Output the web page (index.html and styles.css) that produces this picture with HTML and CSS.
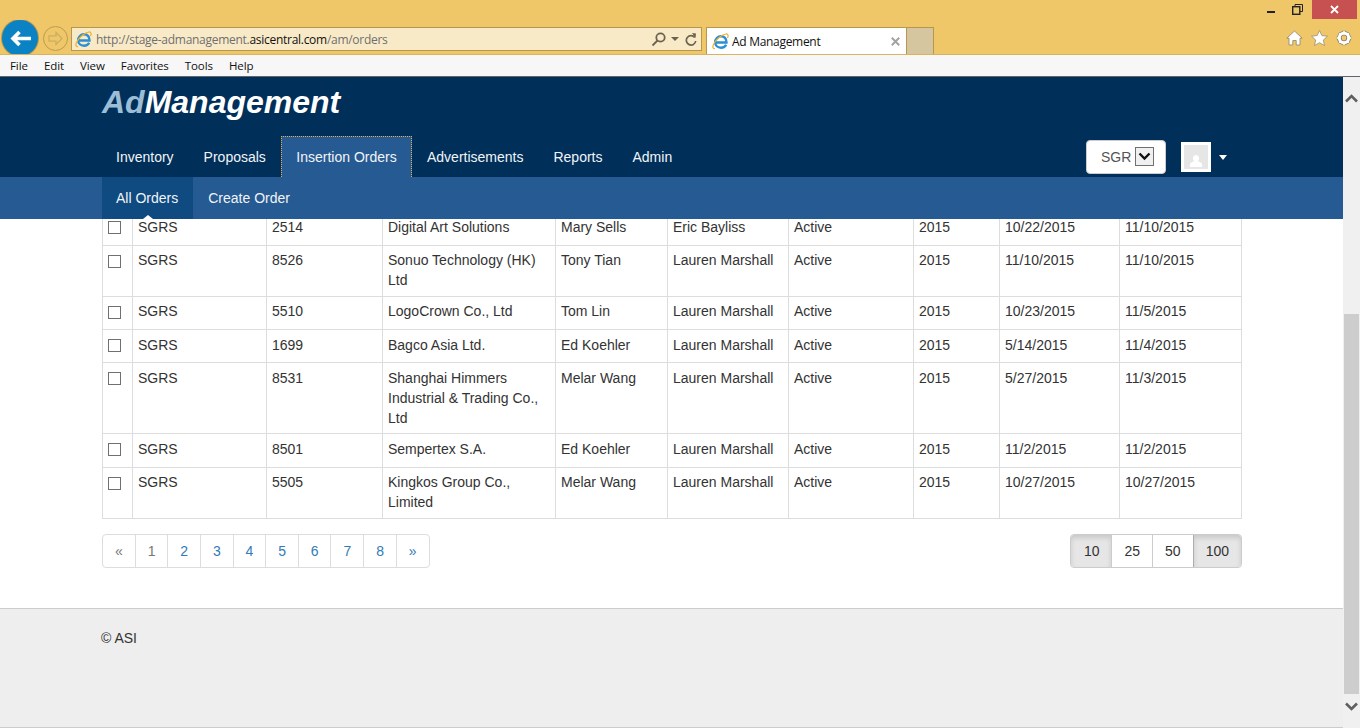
FILE: index.html
```html
<!DOCTYPE html>
<html lang="en">
<head>
<meta charset="utf-8">
<title>Ad Management</title>
<link rel="stylesheet" href="styles.css">
</head>
<body>
<div class="window">
  <div class="chrome">
    <div class="win-row">
      <svg class="win-min" width="9" height="3" viewBox="0 0 9 3"><rect width="8" height="2" y="1" fill="#222"/></svg>
      <svg class="win-restore" width="11" height="11" viewBox="0 0 11 11" fill="none" stroke="#222"><path d="M3 2.500V.5h7.500v7H8"/><rect x=".7" y="2.700" width="7.100" height="7.600" stroke-width="1.400"/></svg>
      <div class="win-close"><svg width="9" height="9" viewBox="0 0 9 9" stroke="#fff" stroke-width="1.800"><path d="M1 1l7 7M8 1l-7 7"/></svg></div>
    </div>
    <div class="nav-row">
      <div class="back"><svg width="21" height="17" viewBox="0 0 21 17" fill="none" stroke="#fff" stroke-width="3.600"><path d="M9.500 2L3 8.500l6.500 6.500M4 8.500h17"/></svg></div>
      <div class="forward"><svg width="17" height="15" viewBox="0 0 17 15" fill="none" stroke="#cdae63" stroke-width="1.300"><path d="M9 1.500l6 6-6 6V10.200H2V4.800h7z"/></svg></div>
      <div class="address">
        <svg class="ie" width="17" height="17" viewBox="0 0 17 17" fill="none"><path d="M3 9.500h11.500C14.600 5.500 12.200 3.300 9 3.300 5.700 3.300 3.200 5.800 3.200 9.200c0 3.400 2.400 5.500 5.800 5.500 2.400 0 4.200-1 5.200-3" stroke="#2a8fd4" stroke-width="2.400"/><path d="M3 15.500C.5 16 .2 13.500 2 10.500 4.500 6 10 1.500 14 1c2.300-.3 2.500 2 1.500 4" stroke="#eeb02c" stroke-width="1.200"/></svg>
        <span class="url">http://stage-admanagement.<b>asicentral.com</b>/am/orders</span>
        <svg class="addr-search" width="16" height="15" viewBox="0 0 16 15" fill="none" stroke="#6b6350" stroke-width="1.800"><circle cx="9.500" cy="5.500" r="4.200"/><path d="M6.500 8.500L1.500 13.500"/></svg>
        <svg class="addr-caret" width="8" height="4" viewBox="0 0 8 4"><path d="M0 0h8L4 4z" fill="#6b6350"/></svg>
        <svg class="addr-refresh" width="12" height="13" viewBox="0 0 12 13" fill="none" stroke="#6b6350" stroke-width="1.700"><path d="M9.800 4.500A4.700 4.700 0 1 0 10.700 8"/><path d="M7 0l4 .5-.5 4.500z" fill="#6b6350" stroke="none"/></svg>
      </div>
      <div class="tab">
        <svg class="ie" width="17" height="17" viewBox="0 0 17 17" fill="none"><path d="M3 9.500h11.500C14.600 5.500 12.200 3.300 9 3.300 5.700 3.300 3.200 5.800 3.200 9.200c0 3.400 2.400 5.500 5.800 5.500 2.400 0 4.200-1 5.200-3" stroke="#2a8fd4" stroke-width="2.400"/><path d="M3 15.500C.5 16 .2 13.500 2 10.500 4.500 6 10 1.500 14 1c2.300-.3 2.500 2 1.500 4" stroke="#eeb02c" stroke-width="1.200"/></svg>
        <span class="tab-title">Ad Management</span>
        <svg class="tab-close" width="9" height="9" viewBox="0 0 9 9" stroke="#a3a3a3" stroke-width="2"><path d="M.8.800l7.400 7.400M8.200.800L.8 8.200"/></svg>
      </div>
      <div class="new-tab"></div>
      <div class="tools">
        <svg width="17" height="16" viewBox="0 0 17 16"><path d="M8.500 1L.8 8.200h2.200V15h3.800v-4.500h3.400V15H14V8.200h2.200z" fill="#fff" stroke="#8d8468" stroke-width=".8"/></svg>
        <svg width="17" height="16" viewBox="0 0 17 16"><path d="M8.500.5l2.400 5.100 5.600.6-4.200 3.800 1.200 5.500-5-2.800-5 2.800 1.200-5.500L.5 6.200l5.600-.6z" fill="#fff" stroke="#8d8468" stroke-width=".7"/></svg>
        <svg width="16" height="16" viewBox="0 0 16 16"><circle cx="8" cy="8" r="4.700" fill="none" stroke="#8d8468" stroke-width="4.600"/><path d="M8 .8v2.500M8 12.700v2.500M.8 8h2.500M12.700 8h2.500M2.900 2.900l1.800 1.800M11.300 11.300l1.800 1.800M2.900 13.100l1.800-1.800M11.300 4.700l1.800-1.800" stroke="#8d8468" stroke-width="3.200"/><circle cx="8" cy="8" r="4.700" fill="none" stroke="#fff" stroke-width="3"/><path d="M8 1.200v2.200M8 12.600v2.200M1.200 8h2.200M12.600 8h2.200M3.200 3.200l1.500 1.500M11.300 11.300l1.500 1.500M3.200 12.800l1.500-1.500M11.300 4.700l1.500-1.500" stroke="#fff" stroke-width="2.200"/></svg>
      </div>
    </div>
  </div>
  <div class="menubar">
    <span>File</span><span>Edit</span><span>View</span><span>Favorites</span><span>Tools</span><span>Help</span>
  </div>
  <div class="viewport">
    <div class="page">
      <header class="site-header">
        <div class="logo"><span class="logo-ad">Ad</span>Management</div>
        <nav class="mainnav">
          <a class="nav-item">Inventory</a>
          <a class="nav-item">Proposals</a>
          <a class="nav-item nav-active">Insertion Orders</a>
          <a class="nav-item">Advertisements</a>
          <a class="nav-item">Reports</a>
          <a class="nav-item">Admin</a>
          <div class="nav-right">
            <div class="org-select">SGR<span class="org-arrow"><svg width="13" height="9" viewBox="0 0 13 9" fill="none" stroke="#111" stroke-width="2.400"><path d="M1.500 1.500l5 5 5-5"/></svg></span></div>
            <div class="avatar"><svg width="24" height="24" viewBox="0 0 24 24"><path d="M12 10c2 0 3 1.400 3 3.200 0 1.300-.6 2.300-1.300 3 2.500.6 4 1.500 4.300 3V22H6v-2.800c.3-1.500 1.800-2.400 4.300-3-.7-.7-1.300-1.700-1.300-3C9 11.400 10 10 12 10z" fill="#fff"/></svg></div>
            <span class="user-caret"></span>
          </div>
        </nav>
      </header>
      <div class="subnav">
        <a class="sub-item sub-active">All Orders</a>
        <a class="sub-item">Create Order</a>
      </div>
      <main class="content">
        <table class="orders">
          <colgroup><col class="c1"><col class="c2"><col class="c3"><col class="c4"><col class="c5"><col class="c6"><col class="c7"><col class="c8"><col class="c9"><col class="c10"></colgroup>
          <tbody>
            <tr class="h33 up first"><td><input type="checkbox"></td><td>SGRS</td><td>2514</td><td>Digital Art Solutions</td><td>Mary Sells</td><td>Eric Bayliss</td><td>Active</td><td>2015</td><td>10/22/2015</td><td>11/10/2015</td></tr>
            <tr class="up"><td><input type="checkbox"></td><td>SGRS</td><td>8526</td><td>Sonuo Technology (HK) Ltd</td><td>Tony Tian</td><td>Lauren Marshall</td><td>Active</td><td>2015</td><td>11/10/2015</td><td>11/10/2015</td></tr>
            <tr class="h33 up"><td><input type="checkbox"></td><td>SGRS</td><td>5510</td><td>LogoCrown Co., Ltd</td><td>Tom Lin</td><td>Lauren Marshall</td><td>Active</td><td>2015</td><td>10/23/2015</td><td>11/5/2015</td></tr>
            <tr class="h33"><td><input type="checkbox"></td><td>SGRS</td><td>1699</td><td>Bagco Asia Ltd.</td><td>Ed Koehler</td><td>Lauren Marshall</td><td>Active</td><td>2015</td><td>5/14/2015</td><td>11/4/2015</td></tr>
            <tr><td><input type="checkbox"></td><td>SGRS</td><td>8531</td><td>Shanghai Himmers Industrial &amp; Trading Co., Ltd</td><td>Melar Wang</td><td>Lauren Marshall</td><td>Active</td><td>2015</td><td>5/27/2015</td><td>11/3/2015</td></tr>
            <tr class="h34"><td><input type="checkbox"></td><td>SGRS</td><td>8501</td><td>Sempertex S.A.</td><td>Ed Koehler</td><td>Lauren Marshall</td><td>Active</td><td>2015</td><td>11/2/2015</td><td>11/2/2015</td></tr>
            <tr class="up"><td><input type="checkbox"></td><td>SGRS</td><td>5505</td><td>Kingkos Group Co., Limited</td><td>Melar Wang</td><td>Lauren Marshall</td><td>Active</td><td>2015</td><td>10/27/2015</td><td>10/27/2015</td></tr>
          </tbody>
        </table>
        <div class="table-foot">
          <div class="pager">
            <a class="disabled">«</a><a class="disabled">1</a><a>2</a><a>3</a><a>4</a><a>5</a><a>6</a><a>7</a><a>8</a><a>»</a>
          </div>
          <div class="sizes">
            <a class="on">10</a><a>25</a><a>50</a><a class="on">100</a>
          </div>
        </div>
      </main>
      <footer class="site-footer">© ASI</footer>
    </div>
    <div class="scrollbar">
      <svg class="sb-arrow" width="13" height="9" viewBox="0 0 13 9" fill="none" stroke="#5f5f5f" stroke-width="2.600"><path d="M1 7.500l5.500-5.500 5.500 5.500"/></svg>
      <div class="sb-track"><div class="sb-thumb"></div></div>
      <svg class="sb-arrow" width="13" height="9" viewBox="0 0 13 9" fill="none" stroke="#5f5f5f" stroke-width="2.600"><path d="M1 1.500l5.500 5.500 5.500-5.500"/></svg>
    </div>
  </div>
</div>
</body>
</html>
```

FILE: styles.css
```css
* { box-sizing: border-box; }
html, body { margin: 0; height: 100%; overflow: hidden; }
body { font-family: "Liberation Sans", Arial, sans-serif; font-size: 14px; line-height: 20px; color: #333; background: #fff; }
a { display: block; }

.window { display: flex; flex-direction: column; height: 728px; }

/* browser frame */
.chrome { height: 55px; background: #efc769; border-bottom: 1px solid #d9b35f; flex: none; font-family: "Open Sans", sans-serif; }
.win-row { height: 20px; display: flex; justify-content: flex-end; align-items: flex-start; padding-right: 3px; }
.win-min { margin: 10px 16px 0 0; }
.win-restore { margin: 4px 9px 0 0; }
.win-close { width: 45px; height: 19px; background: #c75050; display: flex; align-items: center; justify-content: center; }
.nav-row { height: 34px; display: flex; align-items: flex-start; overflow: hidden; position: relative; }
.back { width: 36px; height: 36px; margin-left: 2px; border-radius: 50%; background: #0a82c3; box-shadow: 0 0 0 1px #b8974a; display: flex; align-items: center; justify-content: center; flex: none; }
.forward { width: 25px; height: 25px; margin: 6px 0 0 5px; border-radius: 50%; border: 1px solid #bb9c52; display: flex; align-items: center; justify-content: center; flex: none; }
.address { width: 631px; height: 24px; margin: 7px 0 0 3px; background: #f9eac7; border: 1px solid #b5984f; display: flex; align-items: center; padding: 0 4px 0 3px; flex: none; }
.ie { flex: none; }
.url { font-size: 12px; letter-spacing: -.28px; margin-left: 4px; padding-top: 2px; color: #6f6f6f; white-space: nowrap; }
.url b { font-weight: 400; color: #111; }
.addr-search { margin-left: auto; }
.addr-caret { margin-left: 4px; }
.addr-refresh { margin-left: 6px; }
.tab { width: 200px; height: 27px; margin: 7px 0 0 4px; background: #fff; border: 1px solid #b5984f; border-bottom: 0; border-right: 0; display: flex; align-items: center; padding: 0 6px 0 5px; flex: none; }
.tab-title { font-size: 12px; letter-spacing: -.3px; color: #111; margin-left: 3px; padding-top: 1px; white-space: nowrap; }
.tab-close { margin-left: auto; }
.new-tab { width: 28px; height: 27px; margin-top: 7px; background: #d5c6a0; border: 1px solid #b5984f; border-bottom: 0; flex: none; }
.tools { margin-left: auto; display: flex; gap: 8px; padding: 10px 8px 0 0; align-items: center; }

.menubar { height: 22px; background: #f7f7f7; border-bottom: 1px solid #5f656b; display: flex; flex: none; padding-left: 10px; gap: 16px; font-family: "Open Sans", sans-serif; font-size: 11.500px; letter-spacing: -.08px; line-height: 21px; color: #111; }

.viewport { flex: 1; display: flex; min-height: 0; }
.page { flex: 1; display: flex; flex-direction: column; min-width: 0; }

/* site header */
.site-header { height: 100px; background: #002f5a; flex: none; padding-top: 6px; display: flex; flex-direction: column; }
.logo { padding-left: 102px; height: 53px; font-size: 32px; line-height: 38px; font-weight: 700; font-style: italic; color: #fff; }
.logo-ad { color: #9bbdd6; }
.mainnav { display: flex; padding: 0 116px 0 101px; height: 41px; color: #fff; }
.nav-item { padding: 11px 15px 0; color: #f1f4f7; }
.nav-active { background: #265a92; border: 1px dotted #f0a83c; border-bottom: 0; padding: 10px 14.250px 0 14.500px; }
.nav-right { margin-left: auto; display: flex; align-items: flex-start; padding-top: 4px; }
.org-select { width: 80px; height: 34px; background: #fff; border: 1px solid #ccc; border-radius: 4px; color: #555; padding: 6px 0 0 14px; display: flex; }
.org-arrow { width: 19px; height: 19px; margin-left: 3.500px; border: 1px solid #707070; background: #f0f0f0; display: flex; align-items: center; justify-content: center; }
.avatar { width: 30px; height: 30px; margin: 2px 0 0 15px; background: #e6e6e6; border: 3px solid #fff; }
.user-caret { margin: 15px 0 0 8px; width: 0; height: 0; border-style: solid; border-width: 5px 4.500px 0; border-color: #fff transparent transparent; }

.subnav { height: 42px; background: #265a92; flex: none; display: flex; padding-left: 102px; color: #f1f4f7; }
.sub-item { padding: 11px 15px 0; }
.sub-active { padding-left: 14px; background: #0f4a80; position: relative; }
.sub-active::after { content: ""; position: absolute; left: 41px; bottom: 0; border-style: solid; border-width: 0 5px 4px; border-color: transparent transparent #fff; }

/* content */
.content { height: 389px; flex: none; overflow: hidden; padding: 0 101px 0 102px; }
.orders { width: 1139px; margin-top: -7px; table-layout: fixed; border-collapse: collapse; }
.c1 { width: 30px; } .c2 { width: 134px; } .c3 { width: 116px; } .c4 { width: 173px; } .c5 { width: 112px; }
.c6 { width: 121px; } .c7 { width: 125px; } .c8 { width: 86px; } .c9 { width: 120px; } .c10 { width: 122px; }
.orders td { border: 1px solid #ddd; padding: 5px; vertical-align: top; }
.orders .up td { padding: 4px 5px 6px; }
.orders .h33 { height: 33px; }
.orders .h34 { height: 34px; }
.orders input { appearance: none; display: block; width: 13px; height: 13px; margin: 4px 0 0; background: #fff; border: 1px solid #707070; border-radius: 0; }
.orders .up input { margin-top: 5px; }
.orders .first input { margin-top: 4px; }

.table-foot { display: flex; justify-content: space-between; margin-top: 15px; }
.pager { display: flex; height: 34px; border: 1px solid #ddd; border-radius: 4px; color: #337ab7; }
.pager a { padding: 6px 12px; border-left: 1px solid #ddd; width: 32.650px; }
.pager a:first-child { border-left: 0; width: 31.650px; }
.pager a:last-child { width: 33.200px; }
.pager .disabled { color: #777; }
.sizes { display: flex; height: 34px; color: #333; border: 1px solid #ccc; border-radius: 4px; }
.sizes a { padding: 6px 12px; border-left: 1px solid #ccc; }
.sizes a:first-child { border-left: 0; padding-left: 13px; border-radius: 3px 0 0 3px; }
.sizes a:last-child { border-radius: 0 3px 3px 0; }
.sizes .on { background: #e6e6e6; border-color: #adadad; box-shadow: inset 0 3px 5px rgba(0,0,0,.125); }

.site-footer { flex: 1; background: #eee; border-top: 1px solid #ccc; border-bottom: 1px solid #ccc; padding: 19px 0 0 101px; }

/* scrollbar */
.scrollbar { width: 17px; flex: none; background: #f0f0f0; display: flex; flex-direction: column; align-items: center; padding: 17px 0 17px; }
.sb-arrow { flex: none; }
.sb-track { flex: 1; width: 100%; padding: 0 1px; margin: 0; display: flex; flex-direction: column; justify-content: flex-end; }
.sb-thumb { height: 380px; margin-bottom: 8px; background: #cdcdcd; }
```
